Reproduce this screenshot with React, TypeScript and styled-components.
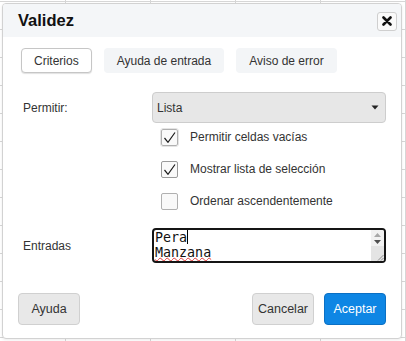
import React from "react";
import styled, { createGlobalStyle } from "styled-components";

const Global = createGlobalStyle`
  html, body { margin: 0; padding: 0; }
  body {
    width: 406px;
    height: 341px;
    overflow: hidden;
    font-family: "Liberation Sans", Arial, sans-serif;
    font-size: 12px;
    color: #333;
    background-color: #fff;
    background-image:
      linear-gradient(to right, #d6d6d6 1px, transparent 1px),
      linear-gradient(to bottom, #d6d6d6 1px, transparent 1px);
    background-size: 85px 100%, 100% 28px;
    background-position: 65px 0, 0 1px;
  }
  #root { padding: 3px 0 0 2px; }
`;

const Dialog = styled.div`
  width: 398px;
  background: #fff;
  border: 1px solid #d2d2d2;
  border-radius: 4px;
  box-shadow: 0 1px 3px rgba(0, 0, 0, 0.08);
  display: flex;
  flex-direction: column;
  overflow: hidden;
`;

const Header = styled.div`
  height: 33px;
  background: #f4f6f8;
  display: flex;
  align-items: center;
  justify-content: space-between;
  padding: 0 4px 0 15px;
`;

const Title = styled.h1`
  margin: 0;
  font-size: 16.5px;
  font-weight: bold;
  color: #111;
`;

const CloseButton = styled.button`
  width: 20px;
  height: 19px;
  margin-top: 1px;
  padding: 0;
  display: flex;
  align-items: center;
  justify-content: center;
  background: #fafafa;
  border: 1px solid #cfcfcf;
  border-radius: 3px;
`;

const Body = styled.div`
  padding: 11px 15px 13px 15px;
  display: flex;
  flex-direction: column;
`;

const Tabs = styled.div`
  display: flex;
  gap: 12px;
  padding-left: 3px;
`;

const Tab = styled.button<{ $active?: boolean }>`
  height: 25px;
  padding: 0 12px;
  font: inherit;
  color: #333;
  border-radius: 4px;
  border: 1px solid ${(p) => (p.$active ? "#c6c6c6" : "transparent")};
  background: ${(p) => (p.$active ? "#fff" : "#f3f5f7")};
  box-shadow: ${(p) => (p.$active ? "0 1px 1px rgba(0,0,0,0.12)" : "none")};
`;

const Form = styled.div`
  margin-top: 19px;
  padding-left: 5px;
  display: grid;
  grid-template-columns: 129px 234px;
  align-items: center;
`;

const Label = styled.div<{ $gap?: number }>`
  grid-column: 1;
  margin-top: ${(p) => p.$gap ?? 0}px;
`;

const Select = styled.div`
  grid-column: 2;
  height: 31px;
  box-sizing: border-box;
  border: 1px solid #cdcdcd;
  border-radius: 4px;
  background: #e7e7e7;
  display: flex;
  align-items: center;
  justify-content: space-between;
  padding: 0 6px 0 4px;
`;

const Checks = styled.div`
  grid-column: 2;
  margin-top: -2px;
  display: flex;
  flex-direction: column;
`;

const CheckRow = styled.label`
  height: 32px;
  display: flex;
  align-items: center;
  gap: 12px;
  padding-left: 9px;
`;

const Box = styled.span<{ $halo?: boolean; $strong?: boolean }>`
  width: 17px;
  height: 17px;
  box-sizing: border-box;
  border: 1px solid ${(p) => (p.$strong ? "#9a9a9a" : "#b0b0b0")};
  border-radius: 2px;
  background: #f9f9f9;
  display: flex;
  outline: ${(p) => (p.$halo ? "1px solid #e4e4e4" : "none")};
`;

const TextBox = styled.div`
  grid-column: 2;
  margin-top: 11px;
  height: 35px;
  box-sizing: border-box;
  border: 2px solid #151515;
  border-radius: 4px;
  display: flex;
  overflow: hidden;
`;

const TextLines = styled.div`
  flex: 1;
  padding: 0 1px;
  font-family: "DejaVu Sans Mono", monospace;
  font-size: 13.33px;
  line-height: 15px;
  color: #111;
  white-space: pre;
`;

const Caret = styled.span`
  display: inline-block;
  width: 0;
  height: 14px;
  border-left: 1px solid #000;
  vertical-align: -2px;
`;

const Misspelled = styled.span`
  text-decoration: underline wavy #e23a3a;
  text-decoration-thickness: 1px;
  text-decoration-skip-ink: none;
  text-underline-offset: 0px;
`;

const ScrollBar = styled.div`
  width: 13px;
  display: flex;
  flex-direction: column;
  background: #f2f2f2;
`;

const ScrollArrows = styled.div`
  height: 16px;
  display: flex;
  flex-direction: column;
  align-items: center;
  justify-content: center;
  gap: 3px;
`;

const ScrollTrack = styled.div`
  flex: 1;
  background: #e4e4e4;
  display: flex;
  align-items: flex-end;
  justify-content: flex-end;
`;

const Footer = styled.div`
  margin-top: 30px;
  display: flex;
  justify-content: space-between;
  align-items: center;
`;

const Group = styled.div`
  display: flex;
  gap: 10px;
`;

const Button = styled.button<{ $primary?: boolean }>`
  width: 62px;
  height: 32px;
  padding: 0;
  font: inherit;
  font-size: 12.5px;
  border-radius: 4px;
  border: 1px solid ${(p) => (p.$primary ? "#0b70c4" : "#d0d0d0")};
  background: ${(p) => (p.$primary ? "#0e86e4" : "#e8e8e8")};
  color: ${(p) => (p.$primary ? "#fff" : "#333")};
`;

const Check = () => (
  <svg width="15" height="15" viewBox="0 0 15 15">
    <polyline points="2.5,8 6,12.3 13,2.5" fill="none" stroke="#1a1a1a" strokeWidth="1.2" />
  </svg>
);

const CheckItem = ({ checked, label, halo, strong }: { checked: boolean; label: string; halo?: boolean; strong?: boolean }) => (
  <CheckRow>
    <Box $halo={halo} $strong={strong}>{checked && <Check />}</Box>
    <span>{label}</span>
  </CheckRow>
);

export default function App() {
  return (
    <>
      <Global />
      <Dialog>
        <Header>
          <Title>Validez</Title>
          <CloseButton aria-label="Cerrar">
            <svg width="10" height="10" viewBox="0 0 10 10">
              <path d="M1.5 1.5 L8.5 8.5 M8.5 1.5 L1.5 8.5" stroke="#111" strokeWidth="2.6" strokeLinecap="round" />
            </svg>
          </CloseButton>
        </Header>
        <Body>
          <Tabs>
            <Tab $active>Criterios</Tab>
            <Tab>Ayuda de entrada</Tab>
            <Tab>Aviso de error</Tab>
          </Tabs>
          <Form>
            <Label>Permitir:</Label>
            <Select>
              <span>Lista</span>
              <svg width="8" height="5" viewBox="0 0 8 5">
                <path d="M0.5 0.5 L7.5 0.5 L4 4.5 Z" fill="#222" />
              </svg>
            </Select>
            <Checks>
              <CheckItem checked halo label="Permitir celdas vacías" />
              <CheckItem checked strong label="Mostrar lista de selección" />
              <CheckItem checked={false} label="Ordenar ascendentemente" />
            </Checks>
            <Label $gap={11}>Entradas</Label>
            <TextBox>
              <TextLines>
                Pera<Caret />
                {"\n"}
                <Misspelled>Manzana</Misspelled>
              </TextLines>
              <ScrollBar>
                <ScrollArrows>
                  <svg width="7" height="4" viewBox="0 0 7 4"><path d="M0 4 L7 4 L3.5 0 Z" fill="#a8a8a8" /></svg>
                  <svg width="7" height="4" viewBox="0 0 7 4"><path d="M0 0 L7 0 L3.5 4 Z" fill="#505050" /></svg>
                </ScrollArrows>
                <ScrollTrack>
                  <svg width="7" height="7" viewBox="0 0 7 7">
                    <path d="M1 6.5 L6.5 1 M4 6.5 L6.5 4" stroke="#777" strokeWidth="0.8" />
                  </svg>
                </ScrollTrack>
              </ScrollBar>
            </TextBox>
          </Form>
          <Footer>
            <Button>Ayuda</Button>
            <Group>
              <Button>Cancelar</Button>
              <Button $primary>Aceptar</Button>
            </Group>
          </Footer>
        </Body>
      </Dialog>
    </>
  );
}
